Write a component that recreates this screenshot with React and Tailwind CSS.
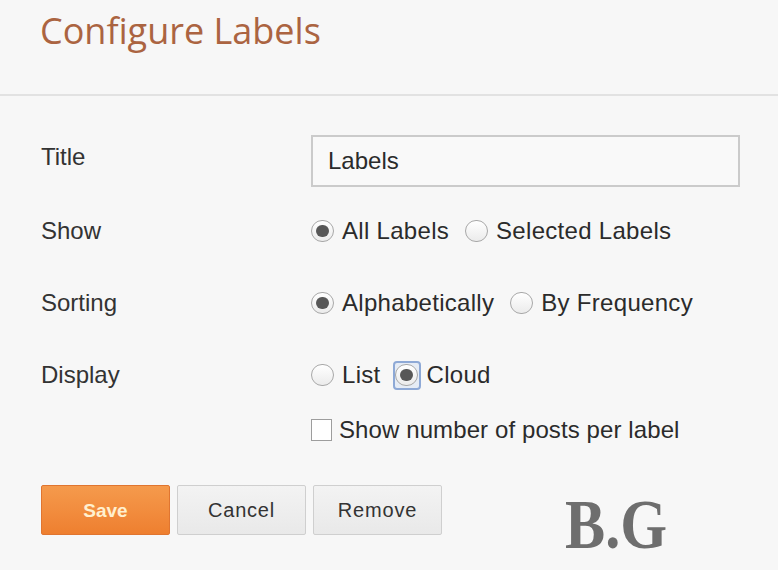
import React from 'react';

const Radio = ({ checked }) => (
    <span className="w-[23px] h-[22px] rounded-full border border-[#a8a8a8] bg-linear-to-b from-white to-[#ebebeb] flex items-center justify-center shrink-0">
        {checked && <span className="w-[13px] h-[12px] rounded-full bg-[#575757]" />}
    </span>
);

const Option = ({ checked, label, focused, className = '' }) => (
    <div className={`flex items-center ${className}`}>
        {focused ? (
            <span className="w-[28px] h-[29px] rounded-[4px] border-2 border-[#8ea9d6] bg-[#e6ecf5] flex items-center justify-center shrink-0">
                <Radio checked={checked} />
            </span>
        ) : (
            <Radio checked={checked} />
        )}
        <span className={`tracking-[0.3px] ${focused ? 'ml-[6px]' : 'ml-[8px]'}`}>{label}</span>
    </div>
);

const Row = ({ label, children, className = '' }) => (
    <div className={`flex items-center h-[36px] ${className}`}>
        <div className="w-[270px] shrink-0 text-[#333]">{label}</div>
        <div className="flex items-center">{children}</div>
    </div>
);

export default function App() {
    return (
        <div className="w-[778px] h-[570px] overflow-hidden bg-[#f7f7f7] text-[#2b2b2b]" style={{ fontFamily: '"Liberation Sans", Arial, sans-serif' }}>
            {/* Header */}
            <div className="h-[96px] pt-[13px] pl-[40px] border-b-2 border-[#e2e2e2]">
                <h1 className="text-[36px] leading-none text-[#ab6441]" style={{ fontFamily: '"Open Sans", sans-serif' }}>
                    Configure Labels
                </h1>
            </div>

            {/* Form */}
            <div className="pl-[41px] pt-[39px] text-[24px] leading-none">
                <div className="flex items-start h-[52px]">
                    <div className="w-[270px] shrink-0 mt-[10px] text-[#333]">Title</div>
                    <div className="w-[429px] h-[52px] border-2 border-[#cbcbcb] bg-[#f9f9f9] flex items-center pl-[15px] text-[#2b2b2b]">
                        Labels
                    </div>
                </div>

                <Row label="Show" className="mt-[26px]">
                    <Option checked label="All Labels" />
                    <Option label="Selected Labels" className="ml-[16px]" />
                </Row>

                <Row label="Sorting" className="mt-[36px]">
                    <Option checked label="Alphabetically" />
                    <Option label="By Frequency" className="ml-[16px]" />
                </Row>

                <Row label="Display" className="mt-[36px]">
                    <Option label="List" />
                    <Option checked focused label="Cloud" className="ml-[12px]" />
                </Row>

                <div className="flex items-center h-[36px] mt-[19px] pl-[270px]">
                    <span className="w-[21px] h-[22px] border border-[#9d9d9d] bg-white shrink-0" />
                    <span className="ml-[7px] tracking-[0.1px]">Show number of posts per label</span>
                </div>

                {/* Buttons */}
                <div className="flex items-start mt-[37px]">
                    <button className="w-[129px] h-[50px] rounded-[2px] border border-[#e07530] bg-linear-to-b from-[#f59a4c] to-[#ee7f2f] text-[#fff0cf] text-[19px] font-bold">
                        Save
                    </button>
                    <button className="w-[129px] h-[50px] ml-[7px] rounded-[2px] border border-[#cfcfcf] bg-linear-to-b from-[#f3f3f3] to-[#e9e9e9] text-[#333] text-[20px] tracking-[0.8px]">
                        Cancel
                    </button>
                    <button className="w-[129px] h-[50px] ml-[7px] rounded-[2px] border border-[#cfcfcf] bg-linear-to-b from-[#f3f3f3] to-[#e9e9e9] text-[#333] text-[20px] tracking-[0.8px]">
                        Remove
                    </button>
                    <div className="ml-[123px] mt-[5px] text-[70px] leading-none font-bold text-[#6e6e6e] scale-x-[0.86] origin-left" style={{ fontFamily: '"Liberation Serif", "Times New Roman", serif' }}>
                        B.G
                    </div>
                </div>
            </div>
        </div>
    );
}
